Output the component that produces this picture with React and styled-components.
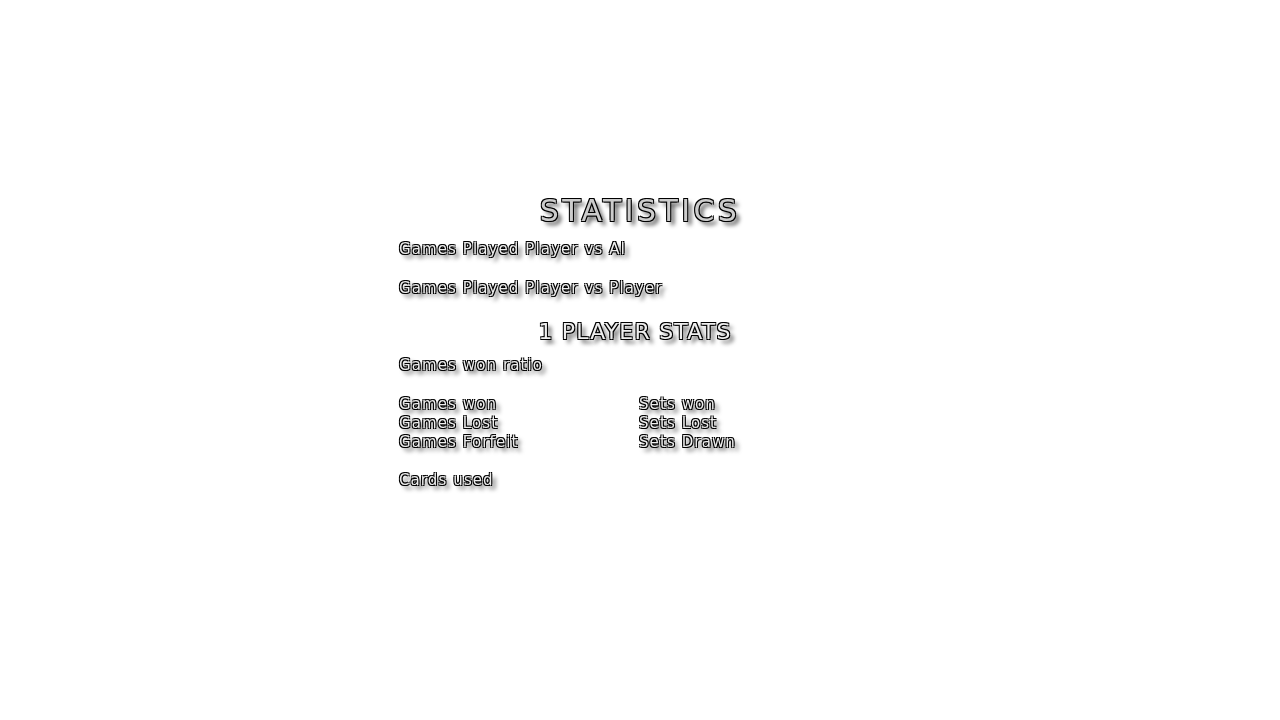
import React from "react";
import styled, { createGlobalStyle } from "styled-components";

const outline =
  "-1px -1px 0 #000, 1px -1px 0 #000, -1px 1px 0 #000, 1px 1px 0 #000, 4px 4px 4px #444";

const GlobalStyle = createGlobalStyle`
  html, body {
    margin: 0;
    background: #fff;
  }
`;

const Page = styled.div`
  height: 720px;
  padding-top: 194px;
  box-sizing: border-box;
  display: flex;
  justify-content: center;
`;

const Panel = styled.main`
  width: 482px;
  color: #eee;
  font-family: "DejaVu Sans", sans-serif;
  font-size: 15px;
  line-height: 19px;
  letter-spacing: 1.1px;
  text-shadow: ${outline};
  will-change: transform;
`;

const Title = styled.h1`
  margin: 0 0 12px;
  font-size: 30px;
  line-height: 34px;
  font-weight: 400;
  letter-spacing: 3.4px;
  text-align: center;
  color: #ccc;
`;

const SubTitle = styled.h2`
  margin: 22px 0 12px;
  padding-right: 10px;
  font-size: 22px;
  line-height: 24px;
  font-weight: 400;
  letter-spacing: 1.2px;
  text-align: center;
`;

const Line = styled.div`
  margin-bottom: 20px;
`;

const Columns = styled.div`
  display: grid;
  grid-template-columns: 240px 240px;
  margin-bottom: 19px;
`;

const Stack = styled.div`
  display: flex;
  flex-direction: column;
`;

export default function App() {
  return (
    <Page>
      <GlobalStyle />
      <Panel>
        <Title>STATISTICS</Title>
        <Line>Games Played Player vs AI</Line>
        <Line>Games Played Player vs Player</Line>
        <SubTitle>1 PLAYER STATS</SubTitle>
        <Line>Games won ratio</Line>
        <Columns>
          <Stack>
            <span>Games won</span>
            <span>Games Lost</span>
            <span>Games Forfeit</span>
          </Stack>
          <Stack>
            <span>Sets won</span>
            <span>Sets Lost</span>
            <span>Sets Drawn</span>
          </Stack>
        </Columns>
        <Line>Cards used</Line>
      </Panel>
    </Page>
  );
}
